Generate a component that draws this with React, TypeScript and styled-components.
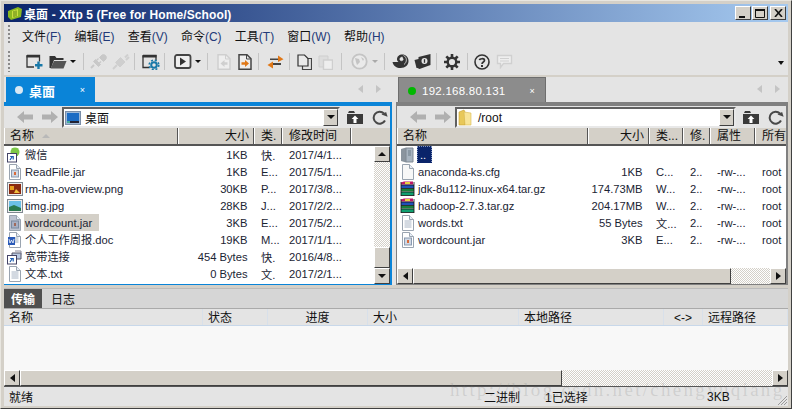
import React from "react";
import styled, { createGlobalStyle } from "styled-components";

const FONT = `"Liberation Sans", "Noto Sans CJK SC", sans-serif`;

const Global = createGlobalStyle`
  html, body { margin: 0; padding: 0; background: #d4d0c8; }
  #root { width: 792px; height: 409px; overflow: hidden; }
  * { box-sizing: border-box; }
`;

const Win = styled.div`
  position: relative; width: 792px; height: 409px; padding: 4px;
  background: #d4d0c8; border: 1px solid #808080; border-top-color: #e8e6e0; border-left-color: #e8e6e0;
  border-right-color: #404040; border-bottom-color: #404040;
  font: 11.2px ${FONT}; color: #111; display: flex; flex-direction: column; overflow: hidden;
`;
const Title = styled.div`
  height: 18px; flex: none; margin: -1px -1px 0 -1px; display: flex; align-items: center; padding: 0 2px 0 3px; gap: 1px;
  background: linear-gradient(90deg, #0a246a, #a6caf0);
  color: #fff; font: bold 12px ${FONT};
`;
const TitleText = styled.span` flex: 1; letter-spacing: 0.1px; `;
const CapBtn = styled.button<{ $l?: number }>`
  width: 16px; height: 14px; padding: 0; background: #d4d0c8; display: flex; align-items: center; justify-content: center;
  margin-left: ${p => p.$l ?? 0}px;
  border: 1px solid; border-color: #fff #404040 #404040 #fff;
`;
const MinGlyph = styled.i` width: 6px; height: 2px; background: #111; margin: 7px 2px 0 0; `;
const Chrome = styled.div` flex: none; margin: 0 -1px; background: #e4e4e4; display: flex; flex-direction: column; `;
const Menu = styled.div`
  height: 26px; display: flex; align-items: center; padding-left: 18px; gap: 13.2px; font-size: 12px;
  position: relative;
`;
const Grip = styled.i`
  position: absolute; left: 4px; top: 3px; bottom: 3px; width: 2px;
  background: repeating-linear-gradient(180deg, #8a8a8a 0 2px, transparent 2px 4px);
`;
const MenuItem = styled.span` color: #111; `;
const Accel = styled.span` color: #223a78; `;
const Tools = styled.div` height: 27px; display: flex; align-items: center; position: relative; `;
const Tool = styled.span<{ $l: number }>`
  margin-left: ${p => p.$l}px; height: 22px; display: flex; align-items: center; justify-content: center; flex: none;
`;
const Sep = styled.i<{ $l: number }>` width: 1px; height: 17px; background: #c4c4c4; margin-left: ${p => p.$l}px; flex: none; `;
const ToolEnd = styled.span`
  position: absolute; right: 4px; top: 13px; width: 0; height: 0;
  border: 3.5px solid transparent; border-top: 4px solid #111; border-bottom: 0;
`;
const Panes = styled.div` flex: none; margin: 2px -1px 0; height: 208px; background: #e4e4e4; display: flex; gap: 4px; `;
const Pane = styled.div<{ $w: number }>` width: ${p => p.$w}px; flex: none; display: flex; flex-direction: column; `;
const TabRow = styled.div` height: 25px; display: flex; align-items: flex-end; position: relative; padding-left: 2px; `;
const Tab = styled.div<{ $on?: boolean; $w: number }>`
  width: ${p => p.$w}px; height: 25px; display: flex; align-items: center; padding: 1px 10px 0 9px; gap: 6px;
  background: ${p => (p.$on ? "#0a84d8" : "#8c8c8c")}; color: #fff; font-weight: ${p => (p.$on ? "bold" : "normal")};
  font-size: ${p => (p.$on ? 13 : 11.5)}px; letter-spacing: ${p => (p.$on ? 0 : 0.25)}px;
  border: ${p => (p.$on ? "0" : "1px solid #6e6e6e")}; border-bottom: 0;
`;
const Dot = styled.i<{ $c: string }>` width: 8px; height: 8px; border-radius: 50%; background: ${p => p.$c}; flex: none; `;
const TabLabel = styled.span` flex: 1; white-space: nowrap; `;
const TabX = styled.span` font-size: 9px; font-weight: normal; `;
const Arrows = styled.div<{ $r: number }>`
  position: absolute; right: ${p => p.$r}px; top: 8px; display: flex; gap: 13px;
`;
const Tri = styled.i<{ $d: "l" | "r" | "u" | "d"; $c?: string; $s?: number }>`
  display: block; width: 0; height: 0; border: ${p => p.$s ?? 4}px solid transparent;
  ${p => {
    const c = p.$c ?? "#b8b8b8"; const s = p.$s ?? 4;
    if (p.$d === "l") return `border-right: ${s + 1}px solid ${c}; border-left: 0;`;
    if (p.$d === "r") return `border-left: ${s + 1}px solid ${c}; border-right: 0;`;
    if (p.$d === "u") return `border-bottom: ${s}px solid ${c}; border-top: 0;`;
    return `border-top: ${s}px solid ${c}; border-bottom: 0;`;
  }}
`;
const SortMark = styled(Tri)` display: inline-block; margin-left: 5px; vertical-align: 2px; `;
const Body = styled.div<{ $blue?: boolean }>`
  flex: 1; min-height: 0; display: flex; flex-direction: column;
  border: 1px solid ${p => (p.$blue ? "#0a84d8" : "#808080")}; border-top-width: 4px; border-bottom-width: 1px; border-right-width: 2px;
  border-left-width: ${p => (p.$blue ? 0 : 1)}px;
  background: #e4e4e4;
`;
const Addr = styled.div` height: 22px; flex: none; display: flex; align-items: center; padding-left: 13px; `;
const AddrNav = styled.div` width: 45px; display: flex; gap: 9px; flex: none; align-items: center; `;
const AddrBox = styled.div`
  flex: 1; height: 21px; background: #fff; display: flex; align-items: center; gap: 4px; padding: 1px 0 0 1px; min-width: 0;
  border: 2px solid; border-color: #606060 #e8e8e8 #e8e8e8 #606060; position: relative; font-size: 12px;
`;
const Drop = styled.span`
  position: absolute; right: 0; top: 0; width: 15px; height: 17px; background: #d4d0c8; display: flex; align-items: center; justify-content: center;
  border: 1px solid; border-color: #fff #404040 #404040 #fff;
`;
const AddrIcons = styled.div` width: 50px; flex: none; display: flex; align-items: center; gap: 9px; padding-left: 7px; `;
const Cols = styled.div` height: 18px; flex: none; display: flex; background: #d4d0c8; border-bottom: 2px solid #555; overflow: hidden; `;
const Col = styled.div<{ $w: number; $r?: boolean; $n?: boolean }>`
  width: ${p => p.$w}px; flex: none; padding: 0 4px 0 ${p => (p.$n ? 5 : 6)}px; white-space: nowrap; overflow: hidden; line-height: 17px; font-size: 12px;
  text-align: ${p => (p.$r ? "right" : "left")}; border-right: 1px solid #555; border-left: 1px solid #fff; position: relative;
`;
const Grow = styled.div` flex: 1; min-height: 0; display: flex; min-width: 0; `;
const List = styled.div` flex: 1; background: #fff; min-width: 0; overflow: hidden; display: flex; flex-direction: column; `;
const Row = styled.div` height: 17px; flex: none; display: flex; align-items: center; white-space: nowrap; color: #1a2433; padding-top: 1px; `;
const Cell = styled.div<{ $w: number; $r?: boolean }>`
  width: ${p => p.$w}px; flex: none; overflow: hidden; text-align: ${p => (p.$r ? "right" : "left")}; padding: 0 6.500px 0 ${p => (p.$r ? 0 : 7)}px;
`;
const NameCell = styled.div<{ $w: number }>` width: ${p => p.$w}px; height: 17px; margin-top: -1px; flex: none; display: flex; align-items: center; padding-left: 3px; gap: 2px; overflow: hidden; `;
const Name = styled.span<{ $sel?: boolean; $focus?: boolean }>`
  line-height: 17px; padding-top: 1px;
  ${p => p.$sel && "background: #d4d0c8; padding-right: 7px; margin-left: -1px; padding-left: 1px;"}
  ${p => p.$focus && "background: #0a246a; color: #fff; outline: 1px dotted #7f93c0; outline-offset: -1px; width: 15px; padding-left: 3px; margin-left: -1px;"}
`;
const Checker = `background: repeating-conic-gradient(#d4d0c8 0 25%, #fff 0 50%) 0 0 / 2px 2px;`;
const VBar = styled.div` width: 16px; flex: none; display: flex; flex-direction: column; ${Checker} `;
const Sb = styled.div<{ $w?: number; $h?: number }>`
  ${p => (p.$w ? `width: ${p.$w}px;` : "")} ${p => (p.$h ? `height: ${p.$h}px;` : "")} flex: none;
  background: #d4d0c8; display: flex; align-items: center; justify-content: center;
  border: 1px solid; border-color: #fff #404040 #404040 #fff;
`;
const Track = styled.div` flex: 1; `;
const HBar = styled.div<{ $wide?: boolean }>`
  height: 16px; flex: none; display: flex; ${p => p.$wide && "margin: 0 -1px;"} ${Checker}
`;
const Splitter = styled.div` height: 3px; flex: none; margin: 0 -1px; background: #d4d0c8; `;
const TTabs = styled.div` height: 21px; flex: none; margin: 0 -1px; display: flex; background: #d6d6d6; border-top: 1px solid #bbb; border-bottom: 1px solid #aaa; font-size: 12px; `;
const TTab = styled.div<{ $on?: boolean }>`
  padding: 0 5px; width: ${p => (p.$on ? 38 : 42)}px; display: flex; align-items: center; justify-content: center;
  ${p => p.$on ? "background: #505050; color: #fff; font-weight: bold;" : "color: #111;"}
`;
const THead = styled.div` height: 17px; flex: none; margin: 0 -1px; display: flex; background: #e4e4e4; border-bottom: 1px solid #c8d8ea; font-size: 12px; `;
const THCell = styled.div<{ $w: number; $c?: boolean }>`
  width: ${p => p.$w}px; flex: none; padding-left: 5px; line-height: 18px; border-right: 1px solid #d8e0ea; white-space: nowrap; overflow: hidden;
  ${p => p.$c && "text-align: center; padding-left: 0;"}
`;
const TBody = styled.div` height: 44px; flex: none; margin: 0 -1px; background: #f8f8f8; `;
const Status = styled.div`
  height: 20px; flex: none; margin: 0 -1px; background: #e4e4e4; border-top: 1px solid #555; display: flex; align-items: center; font-size: 12px; position: relative;
`;
const StatusCell = styled.span<{ $w: number }>` width: ${p => p.$w}px; flex: none; padding-left: 5px; white-space: nowrap; `;
const Watermark = styled.div`
  position: absolute; left: 449px; top: 378px; font: 19px "Liberation Serif", serif; letter-spacing: 2.3px; color: rgba(120,120,120,.2); white-space: nowrap; pointer-events: none;
`;
const Resize = styled.svg` position: absolute; right: 0; bottom: 0; `;

const G = ({ w = 16, h = 16, children }: { w?: number; h?: number; children: React.ReactNode }) => (
  <svg width={w} height={h} viewBox={`0 0 ${w} ${h}`} style={{ display: "block", flex: "none" }}>{children}</svg>
);

/* toolbar icons */
const NewSession = () => <G w={17} h={15}>
  <path d="M1 1.500h12.500v6M1 1.500v11.500h7" fill="none" stroke="#333" strokeWidth="1.300" /><path d="M.5 1h13.500v2.500H.5z" fill="#333" />
  <path d="M12.500 7.500v7.500M9 11.200h7.500" stroke="#1878a8" strokeWidth="2.400" /></G>;
const OpenFolder = () => <G w={18} h={14}>
  <path d="M.5 1h5.500l1.500 2h7v2H5L2 13H.5z" fill="#333" /><path d="M5 6h12.500l-3 7.500H1.500z" fill="#555" /></G>;
const Caret = ({ c = "#111" }: { c?: string }) => <Tri $d="d" $s={3} $c={c} />;
const Plug = () => <G w={18} h={16}>
  <g fill="#c8c8c8" stroke="#c8c8c8">
    <path d="M1 14l3-3" strokeWidth="2" /><path d="M3.500 7.500l5 5 2-2-5-5z" />
    <path d="M9.500 3.500l4 4 2.500-2.500c1-3-1-5-4-4z" /><path d="M6.500 6.500l2-2M9 9.500l2-2" strokeWidth="1.400" />
  </g></G>;
const Plug2 = () => <G w={18} h={16}>
  <g fill="#cfcfcf" stroke="#cfcfcf">
    <path d="M1 15l4-4" strokeWidth="2" /><path d="M3.500 8.500l4.500 4.500 5-5-4.500-4.500z" /><path d="M13 3.500l3-3M14 6l3-3" strokeWidth="2" />
  </g></G>;
const Props = () => <G w={18} h={16}>
  <path d="M1 1.500h13v5M1 1.500v12h6" fill="none" stroke="#333" strokeWidth="1.300" /><path d="M.5 1h14v2.500H.5z" fill="#333" />
  <circle cx="12" cy="11" r="2.800" fill="none" stroke="#1878a8" strokeWidth="2" /><circle cx="12" cy="11" r="4.800" fill="none" stroke="#1878a8" strokeWidth="1.600" strokeDasharray="2 1.800" /></G>;
const PlayBox = () => <G w={18} h={15}>
  <rect x="1" y="1" width="15.500" height="13" rx="2" fill="#eee" stroke="#444" strokeWidth="1.800" /><path d="M6 3.500l6 4-6 4z" fill="#333" /></G>;
const DocArrow = ({ on, left }: { on?: boolean; left?: boolean }) => <G w={14} h={16}>
  <path d="M1 .8h8l4 4V15.200H1z" fill="#eee" stroke={on ? "#444" : "#cfcfcf"} strokeWidth="1.500" />
  <path d="M8.500 1v4h4" fill="none" stroke={on ? "#444" : "#cfcfcf"} />
  <path d={left ? "M3.500 9.500L7.500 6v2.200h3v2.600h-3V13z" : "M11 9.500L7 6v2.200H3.500v2.600H7V13z"} fill={on ? "#e07818" : "#cfcfcf"} /></G>;
const Swap = () => <G w={17} h={14}>
  <path d="M3 3.500h8.500V5H3z" fill="#444" /><path d="M11 .5l5.500 3.800L11 7z" fill="#e07818" />
  <path d="M6 8h8v2H6z" fill="#444" /><path d="M6 6.500L.5 10 6 13.500z" fill="#e07818" /></G>;
const Copy = () => <G w={15} h={16}>
  <path d="M5.500 4.500h9v11h-9z" fill="none" stroke="#444" strokeWidth="1.200" /><path d="M1 1h6.500L11 4.500V12H1z" fill="#eaeaea" stroke="#333" strokeWidth="1.200" /></G>;
const Paste = () => <G w={15} h={16}>
  <path d="M1 2h9v11H1z" fill="#ddd" stroke="#cfcfcf" /><path d="M5.500 6h9v9.500h-9z" fill="#eee" stroke="#cfcfcf" strokeWidth="1.400" /></G>;
const Globe = () => <G w={17} h={17}>
  <circle cx="8.500" cy="8.500" r="7.200" fill="#eaeaea" stroke="#c4c4c4" strokeWidth="1.800" /><path d="M4 5l4 1 1 3-3 3-1-3zM10 4l3 2-1 2z" fill="#c4c4c4" /></G>;
const Snail = () => <G w={17} h={15}>
  <path d="M.5 8c1 4 4 6 8 6 5 0 8-3 8-7 0-4-3-6.500-6-6.500C7 .5 5 2.500 5 5.500c0 3 4 4 6 2.500" fill="#333" />
  <path d="M10.500 3C8 3 7 5.500 8.500 6.500s3.500-.5 2.500-2" fill="#e4e4e4" stroke="#e4e4e4" strokeWidth=".5" />
  <path d="M11.500 1.500C15 3 15.500 8 12 10.500" fill="none" stroke="#e4e4e4" strokeWidth=".8" /></G>;
const Ticket = () => <G w={17} h={16}>
  <path d="M.5 6l4-1V3l12-3v11l-11 4-2-1-1 0z" fill="#333" /><circle cx="10.500" cy="7" r="3" fill="#e4e4e4" /><path d="M10.500 5.200v3.600" stroke="#333" strokeWidth="1.300" /></G>;
const Gear = () => <G w={16} h={16}>
  <circle cx="8" cy="8" r="4.300" fill="none" stroke="#333" strokeWidth="2.400" />
  <path d="M8 0v3M8 13v3M0 8h3M13 8h3M2.300 2.300l2.200 2.200M11.500 11.500l2.200 2.200M2.300 13.700l2.200-2.200M11.500 4.500l2.200-2.200" stroke="#333" strokeWidth="2.600" /></G>;
const Help = () => <G w={16} h={16}>
  <circle cx="8" cy="8" r="7" fill="none" stroke="#333" strokeWidth="1.600" />
  <path d="M5.500 6.200C5.700 4.400 10.400 4 10.500 6.400 10.600 8 8 8 8 10" fill="none" stroke="#333" strokeWidth="1.700" /><path d="M7 11h2v2H7z" fill="#333" /></G>;
const Chat = () => <G w={17} h={15}>
  <path d="M1.500 1.500h14v8h-8l-3 4v-4h-3z" fill="#eee" stroke="#d0d0d0" strokeWidth="1.400" /><path d="M4 4.500h9M4 7h9" stroke="#d0d0d0" /></G>;

/* pane icons */
const NavArrow = ({ r }: { r?: boolean }) => <G w={16} h={12}>
  <path d={r ? "M0 3.500h9V0l7 6-7 6V8.500H0z" : "M16 3.500H7V0L0 6l7 6V8.500h9z"} fill="#b0b0b0" /></G>;
const UpFolder = () => <G w={16} h={13}>
  <path d="M0 3h16v10H0z" fill="#3a3a3a" /><path d="M2 0h5l1 2H1z" fill="#3a3a3a" /><path d="M8 4.500l3.400 3.400H9.500V12h-3V7.900H4.600z" fill="#fff" /></G>;
const Refresh = () => <G w={16} h={15}>
  <path d="M13 10.500A6 6 0 1 1 12 3.500" fill="none" stroke="#484848" strokeWidth="2" /><path d="M9.500 5.500H16l-3-4z" fill="#484848" transform="rotate(20 12 5)" /></G>;
const Desktop = () => <G w={16} h={14}>
  <rect x=".5" y=".5" width="15" height="13" fill="#9db8d8" stroke="#7a8ea8" /><rect x="2" y="2" width="12" height="8" fill="#1c6cc4" /><path d="M2 10h12v2H2z" fill="#223" /><path d="M2 10h3v2H2z" fill="#4a9" /></G>;
const FolderTall = () => <G w={16} h={17}>
  <path d="M1 3l5-2 1 2v13H1z" fill="#e8c85a" stroke="#c8a030" strokeWidth=".6" /><path d="M6 3l7 1v12H7z" fill="#f8e498" stroke="#d8b850" strokeWidth=".6" /></G>;

type IconKind = "shortcut" | "jar" | "jarSel" | "png" | "jpg" | "doc" | "net" | "txt" | "cfg" | "rar" | "up";
const FileBase = ({ children, fill = "#fff" }: { children?: React.ReactNode; fill?: string }) => <>
  <path d="M2.500 .5h7l4 4v11h-11z" fill={fill} stroke="#9aa4b0" /><path d="M9.500.5v4h4" fill="#e8eef6" stroke="#9aa4b0" />{children}</>;
const Shortcut = () => <><rect x=".5" y="6.500" width="9" height="8.500" fill="#fff" stroke="#446" /><path d="M3 13l2-3M3.200 9.500h3v3" stroke="#1a5ab0" strokeWidth="1.200" fill="none" /></>;
const FileIcon = ({ k }: { k: IconKind }) => {
  switch (k) {
    case "shortcut": return <G><circle cx="8" cy="5" r="4.500" fill="#7ec848" /><path d="M5 1l1 2M11 1l-1 2" stroke="#7ec848" /><Shortcut /></G>;
    case "jar": return <G><FileBase><rect x="4.500" y="6" width="7" height="7" fill="#d0d8e4" stroke="#8a9ab0" /><path d="M7 8h2v3H7z" fill="#d86a3a" /></FileBase></G>;
    case "jarSel": return <G><FileBase fill="#bcc2d0"><rect x="4.500" y="6" width="7" height="7" fill="#a8b0c4" stroke="#7a8aa0" /><path d="M7 8h2v3H7z" fill="#a06a5a" /></FileBase></G>;
    case "png": return <G><rect x=".5" y="1.500" width="15" height="13" fill="#eee" stroke="#808890" /><rect x="2" y="3" width="12" height="10" fill="#8a2a10" /><path d="M3 5h4v4H3z" fill="#e8a020" /><path d="M9 8l4 4H7z" fill="#f0c040" /></G>;
    case "jpg": return <G><rect x=".5" y="1.500" width="15" height="13" fill="#eee" stroke="#808890" /><rect x="2" y="3" width="12" height="10" fill="#6cc0e8" /><path d="M2 9l5-2 7 3v3H2z" fill="#2a7a50" /></G>;
    case "doc": return <G><FileBase><path d="M4.500 6h7M4.500 8h7M4.500 10h7" stroke="#9ab" /></FileBase><rect x="1" y="5" width="7" height="8" fill="#2a5ab8" /><path d="M2 7l1 4 1.500-3 1.500 3 1-4" stroke="#fff" fill="none" strokeWidth=".8" /></G>;
    case "net": return <G><path d="M5 4h9v6H5z" fill="#b8c8e0" stroke="#556" /><path d="M8 2h6v4" fill="none" stroke="#889" /><Shortcut /></G>;
    case "txt": return <G><FileBase><path d="M4.500 6h7M4.500 8h7M4.500 10h7M4.500 12h7" stroke="#a8b4c4" /></FileBase></G>;
    case "cfg": return <G><FileBase fill="#f8f8f8" /></G>;
    case "rar": return <G><path d="M1 1.500l3-1h9v3H1z" fill="#c01868" /><path d="M5 1h5v2H5z" fill="#e8d040" /><path d="M1 4h13v3H1z" fill="#2050b8" /><path d="M1 7.500h13v3H1z" fill="#18803a" /><path d="M1 11h13v3.500H1z" fill="#10a070" /><path d="M1 4h13M1 7.500h13M1 11h13M1 14.500h13M1 1v14M14 1v14" stroke="#111" strokeWidth=".8" /></G>;
    case "up": return <G><path d="M1 2l5-1.500v15L1 14z" fill="#8a949e" /><path d="M6 1h7v14H6z" fill="#a8b4c0" stroke="#808a94" /><path d="M8 3h3v6H8z" fill="#8a98a4" /></G>;
  }
};

const L = [
  ["shortcut", "微信", "1KB", "快.", "2017/4/1..."],
  ["jar", "ReadFile.jar", "1KB", "E...", "2017/5/1..."],
  ["png", "rm-ha-overview.png", "30KB", "P...", "2017/3/8..."],
  ["jpg", "timg.jpg", "28KB", "J...", "2017/2/2..."],
  ["jarSel", "wordcount.jar", "3KB", "E...", "2017/5/2..."],
  ["doc", "个人工作周报.doc", "19KB", "M...", "2017/1/1..."],
  ["net", "宽带连接", "454 Bytes", "快.", "2016/4/8..."],
  ["txt", "文本.txt", "0 Bytes", "文.", "2017/2/1..."],
] as const;
const R = [
  ["cfg", "anaconda-ks.cfg", "1KB", "C...", "2..", "-rw-..."],
  ["rar", "jdk-8u112-linux-x64.tar.gz", "174.73MB", "W...", "2..", "-rw-..."],
  ["rar", "hadoop-2.7.3.tar.gz", "204.17MB", "W...", "2..", "-rw-..."],
  ["txt", "words.txt", "55 Bytes", "文...", "2..", "-rw-..."],
  ["jar", "wordcount.jar", "3KB", "E...", "2..", "-rw-..."],
] as const;

const Menus: [string, string][] = [["文件", "(F)"], ["编辑", "(E)"], ["查看", "(V)"], ["命令", "(C)"], ["工具", "(T)"], ["窗口", "(W)"], ["帮助", "(H)"]];

export default function App() {
  return <>
    <Global />
    <Win>
      <Title>
        <G w={16} h={14}><path d="M1 5l10-4 4 2-1 8-10 3-3-3z" fill="#8ab820" /><path d="M5 5l6-2v7l-6 2z" fill="#c8e040" /><path d="M7 5v6M9 4.500v6" stroke="#5a8010" /></G>
        <TitleText>桌面 - Xftp 5 (Free for Home/School)</TitleText>
        <CapBtn><MinGlyph /></CapBtn>
        <CapBtn $l={0}><G w={10} h={9}><path d="M.5 1.500h9v7h-9z" fill="none" stroke="#111" /><path d="M0 0h10v2H0z" fill="#111" /></G></CapBtn>
        <CapBtn $l={1}><G w={9} h={8}><path d="M1 0l7 8M8 0l-7 8" stroke="#111" strokeWidth="1.600" /></G></CapBtn>
      </Title>
      <Chrome>
        <Menu><Grip />{Menus.map(([a, b]) => <MenuItem key={a}>{a}<Accel>{b}</Accel></MenuItem>)}</Menu>
        <Tools>
          <Grip />
          <Tool $l={22}><NewSession /></Tool>
          <Tool $l={6}><OpenFolder /></Tool><Tool $l={3}><Caret /></Tool>
          <Sep $l={7} />
          <Tool $l={6}><Plug /></Tool><Tool $l={4}><Plug2 /></Tool>
          <Sep $l={4} />
          <Tool $l={7}><Props /></Tool>
          <Sep $l={4} />
          <Tool $l={9}><PlayBox /></Tool><Tool $l={3}><Caret /></Tool>
          <Sep $l={6} />
          <Tool $l={9}><DocArrow left /></Tool><Tool $l={7}><DocArrow on /></Tool>
          <Sep $l={6} />
          <Tool $l={8}><Swap /></Tool>
          <Sep $l={5} />
          <Tool $l={7}><Copy /></Tool><Tool $l={6}><Paste /></Tool>
          <Sep $l={8} />
          <Tool $l={9}><Globe /></Tool><Tool $l={4}><Caret c="#aaa" /></Tool>
          <Sep $l={6} />
          <Tool $l={7}><Snail /></Tool><Tool $l={5}><Ticket /></Tool>
          <Sep $l={5} />
          <Tool $l={7}><Gear /></Tool>
          <Sep $l={7} />
          <Tool $l={6}><Help /></Tool><Tool $l={6}><Chat /></Tool>
          <ToolEnd />
        </Tools>
      </Chrome>
      <Panes>
        <Pane $w={388}>
          <TabRow>
            <Tab $on $w={89}><Dot $c="#d8e8f4" /><TabLabel>桌面</TabLabel><TabX>×</TabX></Tab>
            <Arrows $r={11}><Tri $d="l" $c="#c4c4c4" /><Tri $d="r" $c="#c4c4c4" /></Arrows>
          </TabRow>
          <Body $blue>
            <Addr>
              <AddrNav><NavArrow /><NavArrow r /></AddrNav>
              <AddrBox><Desktop />桌面<Drop><Tri $d="d" $c="#111" /></Drop></AddrBox>
              <AddrIcons><UpFolder /><Refresh /></AddrIcons>
            </Addr>
            <Cols>
              <Col $n $w={174}>名称 <SortMark $d="u" $s={4} /></Col>
              <Col $w={76} $r>大小</Col>
              <Col $w={28}>类.</Col>
              <Col $w={69}>修改时间</Col>
              <Col $w={41} />
            </Cols>
            <Grow>
              <List>
                {L.map((r, i) => <Row key={i}>
                  <NameCell $w={174}><FileIcon k={r[0]} /><Name $sel={i === 4}>{r[1]}</Name></NameCell>
                  <Cell $w={76} $r>{r[2]}</Cell>
                  <Cell $w={28}>{r[3]}</Cell>
                  <Cell $w={72}>{r[4]}</Cell>
                </Row>)}
              </List>
              <VBar>
                <Sb $h={16}><Tri $d="u" $c="#111" /></Sb>
                <Track />
                <Sb $h={21} />
                <Sb $h={16}><Tri $d="d" $c="#111" /></Sb>
              </VBar>
            </Grow>
          </Body>
        </Pane>
        <Pane $w={392}>
          <TabRow>
            <Tab $w={148}><Dot $c="#00b800" /><TabLabel>192.168.80.131</TabLabel><TabX>×</TabX></Tab>
            <Arrows $r={8}><Tri $d="l" $c="#c4c4c4" /><Tri $d="r" $c="#c4c4c4" /></Arrows>
          </TabRow>
          <Body>
            <Addr>
              <AddrNav><NavArrow /><NavArrow r /></AddrNav>
              <AddrBox><FolderTall />/root<Drop><Tri $d="d" $c="#111" /></Drop></AddrBox>
              <AddrIcons><UpFolder /><Refresh /></AddrIcons>
            </Addr>
            <Cols>
              <Col $n $w={191}>名称</Col>
              <Col $w={61} $r>大小</Col>
              <Col $w={34}>类...</Col>
              <Col $w={27}>修.</Col>
              <Col $w={45}>属性</Col>
              <Col $w={40}>所有者</Col>
            </Cols>
            <List>
              <Row><NameCell $w={191}><FileIcon k="up" /><Name $focus>..</Name></NameCell></Row>
              {R.map((r, i) => <Row key={i}>
                <NameCell $w={191}><FileIcon k={r[0]} /><Name>{r[1]}</Name></NameCell>
                <Cell $w={61} $r>{r[2]}</Cell>
                <Cell $w={34}>{r[3]}</Cell>
                <Cell $w={27}>{r[4]}</Cell>
                <Cell $w={45}>{r[5]}</Cell>
                <Cell $w={40}>root</Cell>
              </Row>)}
            </List>
            <HBar>
              <Sb $w={16}><Tri $d="l" $c="#111" /></Sb>
              <Sb $w={318} />
              <Track />
              <Sb $w={16}><Tri $d="r" $c="#111" /></Sb>
            </HBar>
          </Body>
        </Pane>
      </Panes>
      <Splitter />
      <TTabs><TTab $on>传输</TTab><TTab>日志</TTab></TTabs>
      <THead>
        <THCell $w={199}>名称</THCell>
        <THCell $w={65}>状态</THCell>
        <THCell $w={100} $c>进度</THCell>
        <THCell $w={151}>大小</THCell>
        <THCell $w={145}>本地路径</THCell>
        <THCell $w={39} $c>&lt;-&gt;</THCell>
        <THCell $w={85}>远程路径</THCell>
      </THead>
      <TBody />
      <HBar $wide>
        <Sb $w={16}><Tri $d="l" $c="#111" /></Sb>
        <Sb $w={542} />
        <Track />
        <Sb $w={16}><Tri $d="r" $c="#111" /></Sb>
      </HBar>
      <Status>
        <StatusCell $w={475}>就绪</StatusCell>
        <StatusCell $w={61}>二进制</StatusCell>
        <StatusCell $w={162}>1已选择</StatusCell>
        <StatusCell $w={40}>3KB</StatusCell>
        <Resize width="14" height="14" viewBox="0 0 14 14"><path d="M13 4l-9 9M13 7l-6 6M13 10l-3 3" stroke="#999" /></Resize>
      </Status>
      <Watermark>http://blog.csdn.net/chengyuqiang</Watermark>
    </Win>
  </>;
}
